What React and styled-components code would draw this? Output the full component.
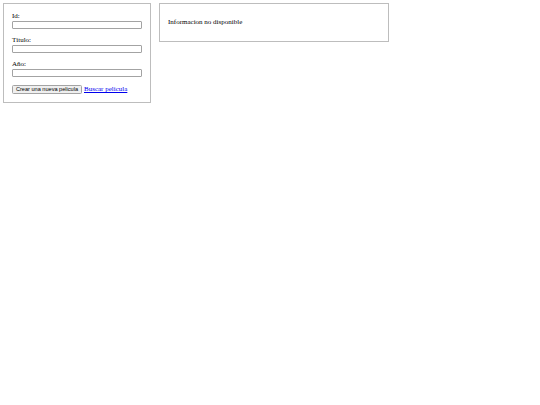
import React from 'react';
import styled, { createGlobalStyle } from 'styled-components';

const GlobalStyle = createGlobalStyle`
  body {
    margin: 0;
    background: #fff;
    font-family: "Liberation Serif", "Times New Roman", serif;
    color: #000;
  }
`;

const Page = styled.div`
  display: flex;
  align-items: flex-start;
  gap: 8px;
  padding: 3px;
`;

const Panel = styled.div`
  border: 1px solid #bdbdbd;
  padding: 8px;
  width: ${(p) => p.width}px;
  box-sizing: border-box;
`;

const Field = styled.div`
  margin-bottom: 7px;
`;

const Label = styled.label`
  display: block;
  font-size: 7px;
  line-height: 9px;
`;

const Input = styled.input`
  display: block;
  box-sizing: border-box;
  width: 130px;
  height: 8px;
  margin: 0;
  padding: 0;
  border: 1px solid #a3a3a3;
  border-radius: 1px;
  background: #fff;
`;

const Actions = styled.div`
  display: flex;
  align-items: center;
  gap: 2px;
  margin-top: 8px;
  height: 9px;
`;

const Button = styled.button`
  box-sizing: border-box;
  height: 9px;
  width: 70px;
  padding: 0 2px;
  margin: 0;
  font-family: "Liberation Sans", Arial, sans-serif;
  font-size: 5.6px;
  line-height: 7px;
  color: #000;
  background: #efefef;
  border: 1px solid #a3a3a3;
  border-radius: 1.5px;
  white-space: nowrap;
`;

const Link = styled.a`
  font-size: 7px;
  line-height: 9px;
  color: #0000ee;
  text-decoration: underline;
`;

const Message = styled.p`
  margin: 6px 0;
  font-size: 7px;
  line-height: 9px;
`;

const App = () => {
  return (
    <>
      <GlobalStyle />
      <Page>
        <Panel width={148}>
          <Field>
            <Label>Id:</Label>
            <Input type='text' />
          </Field>
          <Field>
            <Label>Título:</Label>
            <Input type='text' />
          </Field>
          <Field>
            <Label>Año:</Label>
            <Input type='text' />
          </Field>
          <Actions>
            <Button>Crear una nueva pelicula</Button>
            <Link href='#'>Buscar pelicula</Link>
          </Actions>
        </Panel>
        <Panel width={230}>
          <Message>Informacion no disponible</Message>
        </Panel>
      </Page>
    </>
  );
};

export default App;
